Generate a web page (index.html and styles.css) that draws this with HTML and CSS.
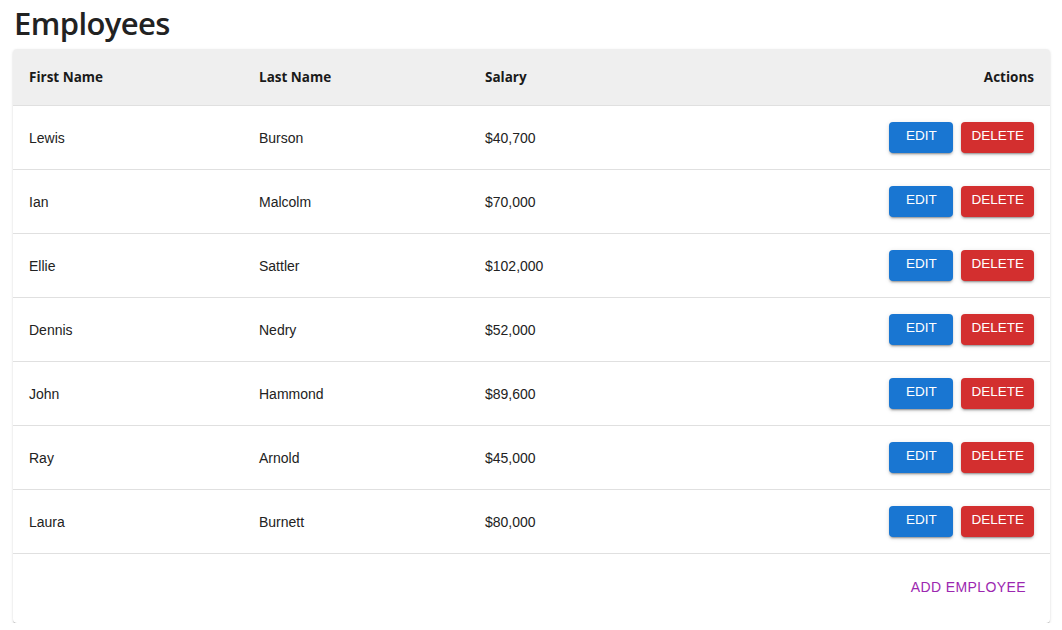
FILE: index.html
```html
<!DOCTYPE html>
<html>
<head>
<meta charset="utf-8">
<link rel="stylesheet" href="styles.css">
</head>
<body>
<h1 class="title">Employees</h1>
<div class="card">
  <table class="table">
    <colgroup>
      <col class="c1"><col class="c2"><col class="c3"><col class="c4">
    </colgroup>
    <thead>
      <tr><th>First Name</th><th>Last Name</th><th>Salary</th><th class="right">Actions</th></tr>
    </thead>
    <tbody>
      <tr><td>Lewis</td><td>Burson</td><td>$40,700</td><td class="right"><div class="actions"><button class="btn edit">Edit</button><button class="btn del">Delete</button></div></td></tr>
      <tr><td>Ian</td><td>Malcolm</td><td>$70,000</td><td class="right"><div class="actions"><button class="btn edit">Edit</button><button class="btn del">Delete</button></div></td></tr>
      <tr><td>Ellie</td><td>Sattler</td><td>$102,000</td><td class="right"><div class="actions"><button class="btn edit">Edit</button><button class="btn del">Delete</button></div></td></tr>
      <tr><td>Dennis</td><td>Nedry</td><td>$52,000</td><td class="right"><div class="actions"><button class="btn edit">Edit</button><button class="btn del">Delete</button></div></td></tr>
      <tr><td>John</td><td>Hammond</td><td>$89,600</td><td class="right"><div class="actions"><button class="btn edit">Edit</button><button class="btn del">Delete</button></div></td></tr>
      <tr><td>Ray</td><td>Arnold</td><td>$45,000</td><td class="right"><div class="actions"><button class="btn edit">Edit</button><button class="btn del">Delete</button></div></td></tr>
      <tr><td>Laura</td><td>Burnett</td><td>$80,000</td><td class="right"><div class="actions"><button class="btn edit">Edit</button><button class="btn del">Delete</button></div></td></tr>
    </tbody>
  </table>
  <div class="footer"><button class="add">Add Employee</button></div>
</div>
</body>
</html>
```
FILE: styles.css
```css
html, body { background: #fff; }
body {
  margin: 0;
  padding: 0 12px 0 13px;
  font-family: "Liberation Sans", Arial, sans-serif;
  color: rgba(0,0,0,0.87);
}
.title {
  margin: 0;
  padding: 3px 0 0 1px;
  height: 45px;
  box-sizing: border-box;
  font-family: "Open Sans", "Noto Sans", sans-serif;
  font-weight: 600;
  font-size: 31px;
  line-height: 40px;
  color: #222;
  letter-spacing: -0.6px;
}
.card {
  background: #fff;
  border-radius: 4px;
  box-shadow: 0 2px 1px -1px rgba(0,0,0,0.2), 0 1px 1px 0 rgba(0,0,0,0.14), 0 1px 3px 0 rgba(0,0,0,0.12);
  overflow: hidden;
  width: 1037px;
  margin-top: 4px;
}
.table {
  width: 100%;
  border-collapse: collapse;
  table-layout: fixed;
}
.c1 { width: 230px; }
.c2 { width: 226px; }
.c3 { width: 200px; }
th, td {
  text-align: left;
  padding: 0 16px;
  font-size: 14px;
  border-bottom: 1px solid #e0e0e0;
}
th {
  height: 56px;
  background: #efefef;
  font-family: "Open Sans", "Noto Sans", sans-serif;
  font-weight: 700;
  font-size: 13.5px;
  color: #1a1a1a;
}
td {
  height: 62px;
  padding-top: 1px;
  color: #222;
}
.right { text-align: right; }
.actions {
  display: flex;
  justify-content: flex-end;
  gap: 8px;
  margin-top: -2px;
}
.btn {
  font-family: "Liberation Sans", Arial, sans-serif;
  font-size: 13.5px;
  text-transform: uppercase;
  color: #fff;
  border: 0;
  border-radius: 4px;
  height: 31px;
  padding: 0 10px 3px;
  box-shadow: 0 3px 1px -2px rgba(0,0,0,0.2), 0 2px 2px 0 rgba(0,0,0,0.14), 0 1px 5px 0 rgba(0,0,0,0.12);
}
.edit { background: #1976d2; min-width: 64px; }
.del { background: #d32f2f; }
.footer {
  height: 69px;
  display: flex;
  justify-content: flex-end;
  align-items: center;
  padding-right: 16px;
}
.add {
  background: none;
  border: 0;
  font-family: "Liberation Sans", Arial, sans-serif;
  font-size: 14px;
  letter-spacing: 0.4px;
  text-transform: uppercase;
  color: #9c27b0;
  padding: 6px 8px;
  margin-top: -3px;
}
```
